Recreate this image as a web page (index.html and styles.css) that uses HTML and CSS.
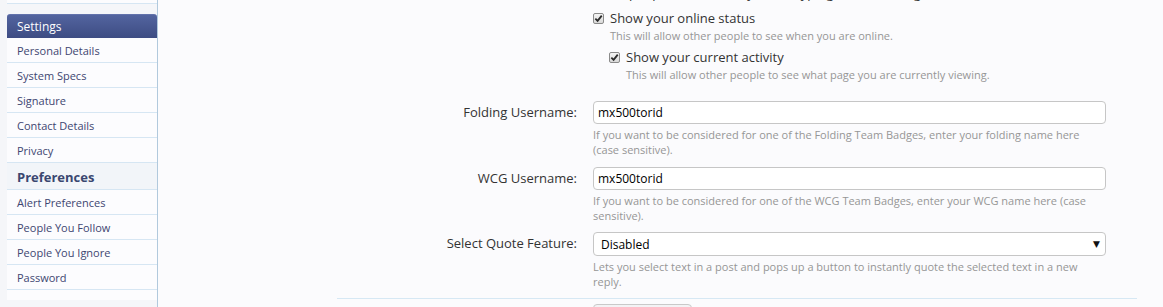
FILE: index.html
```html
<!DOCTYPE html>
<html lang="en">
<head>
    <meta charset="UTF-8">
    <title>Preferences</title>
    <link rel="stylesheet" href="styles.css">
</head>
<body>
    <!-- Side menu -->
    <div class="sidebar">
        <div class="prev-block"></div>
        <div class="menu">
            <div class="menu-heading">Settings</div>
            <a class="menu-item" href="#">Personal Details</a>
            <a class="menu-item" href="#">System Specs</a>
            <a class="menu-item" href="#">Signature</a>
            <a class="menu-item" href="#">Contact Details</a>
            <a class="menu-item" href="#">Privacy</a>
            <a class="menu-item current" href="#">Preferences</a>
            <a class="menu-item" href="#">Alert Preferences</a>
            <a class="menu-item" href="#">People You Follow</a>
            <a class="menu-item" href="#">People You Ignore</a>
            <a class="menu-item" href="#">Password</a>
        </div>
    </div>

    <!-- Form -->
    <div class="main">
        <form class="prefs">
            <div class="row">
                <div class="label"></div>
                <div class="ctrl">
                    <div class="cut-line">Allow people to see what you are typing in the message box</div>
                    <label class="check-row">
                        <span class="check"><svg viewBox="0 0 10 10" width="9" height="9"><path d="M1.5 5.2 L4 7.6 L8.6 1.8" fill="none" stroke="#2b2b2b" stroke-width="2"/></svg></span>
                        Show your online status
                    </label>
                    <p class="hint indent">This will allow other people to see when you are online.</p>
                    <div class="sub">
                        <label class="check-row">
                            <span class="check"><svg viewBox="0 0 10 10" width="9" height="9"><path d="M1.5 5.2 L4 7.6 L8.6 1.8" fill="none" stroke="#2b2b2b" stroke-width="2"/></svg></span>
                            Show your current activity
                        </label>
                        <p class="hint indent">This will allow other people to see what page you are currently viewing.</p>
                    </div>
                </div>
            </div>

            <div class="row folding">
                <div class="label">Folding Username:</div>
                <div class="ctrl">
                    <input class="text-input" type="text" value="mx500torid">
                    <p class="hint">If you want to be considered for one of the Folding Team Badges, enter your folding name here (case sensitive).</p>
                </div>
            </div>

            <div class="row wcg">
                <div class="label">WCG Username:</div>
                <div class="ctrl">
                    <input class="text-input" type="text" value="mx500torid">
                    <p class="hint">If you want to be considered for one of the WCG Team Badges, enter your WCG name here (case sensitive).</p>
                </div>
            </div>

            <div class="row quote">
                <div class="label">Select Quote Feature:</div>
                <div class="ctrl">
                    <div class="select-wrap">
                        <select class="select-input">
                            <option>Disabled</option>
                            <option>Enabled</option>
                        </select>
                        <span class="arrow">▼</span>
                    </div>
                    <p class="hint">Lets you select text in a post and pops up a button to instantly quote the selected text in a new reply.</p>
                </div>
            </div>

            <div class="submit-row">
                <div class="label"></div>
                <div class="ctrl">
                    <button class="button" type="button">Save Changes</button>
                </div>
            </div>
        </form>
    </div>
</body>
</html>
```

FILE: styles.css
```css
/* Common */
body {
    margin: 0;
    height: 307px;
    overflow: hidden;
    display: flex;
    background-color: #fbfbfd;
    font-family: 'Open Sans', 'DejaVu Sans', sans-serif;
}

/* Side menu */
.sidebar {
    width: 150px;
    padding-left: 7px;
    border-right: 1px solid #b1c9dd;
    background-color: #f5f6f9;
    flex-shrink: 0;
}

.prev-block {
    height: 3px;
    background-color: #fcfcfe;
    border-bottom: 1px solid #d6e6f3;
    margin-bottom: 10px;
}

.menu {
    background-color: #fcfcfe;
    padding-bottom: 10px;
}

.menu-heading {
    height: 24px;
    line-height: 24px;
    padding-left: 10px;
    color: #ffffff;
    font-size: 12px;
    background: linear-gradient(to bottom, #53649f, #3d4c83);
    border-top: 1px solid #6272ab;
    box-sizing: border-box;
    border-radius: 3px 3px 0 0;
}

.menu-item {
    display: block;
    height: 24px;
    line-height: 26px;
    padding-left: 10px;
    font-size: 11px;
    color: #3e4671;
    text-decoration: none;
    border-bottom: 1px solid #d6e6f3;
}

.menu-item.current {
    height: 26px;
    line-height: 28px;
    font-size: 13px;
    font-weight: bold;
    color: #3a4770;
    background-color: #f2f5f9;
}

/* Form */
.main {
    flex: 1;
    padding-left: 179px;
}

.prefs {
    width: 800px;
}

.row,
.submit-row {
    display: grid;
    grid-template-columns: 240px 513px;
    column-gap: 16px;
}

.label {
    text-align: right;
    font-size: 13px;
    line-height: 23px;
    color: #333333;
}

.cut-line {
    margin-top: -16px;
    padding-bottom: 1px;
    font-size: 13px;
    line-height: 18px;
    color: #333333;
    white-space: nowrap;
}

.check-row {
    display: flex;
    align-items: center;
    gap: 6px;
    margin-top: 6px;
    font-size: 13px;
    line-height: 18px;
    color: #333333;
}

.check {
    width: 9px;
    height: 9px;
    border: 1px solid #8a8a8a;
    border-radius: 2px;
    background: linear-gradient(to bottom, #f4f4f4, #d9d9d9);
    display: flex;
    align-items: center;
    justify-content: center;
}

.hint {
    margin: 3px 0 0;
    font-size: 11px;
    line-height: 15px;
    color: #969696;
}

.hint.indent {
    margin-top: 1px;
    padding-left: 17px;
}

.sub {
    padding-left: 16px;
}

.sub .check-row {
    margin-top: 5px;
}

.folding {
    margin-top: 19px;
}

.wcg {
    margin-top: 10px;
}

.quote {
    margin-top: 9px;
}

.text-input {
    display: block;
    width: 100%;
    height: 23px;
    box-sizing: border-box;
    padding: 0 4px;
    border: 1px solid #c6c6c6;
    border-radius: 4px;
    background-color: #ffffff;
    font-family: inherit;
    font-size: 12px;
    color: #000000;
}

.select-wrap {
    position: relative;
}

.select-input {
    display: block;
    width: 100%;
    height: 24px;
    box-sizing: border-box;
    padding: 0 7px;
    border: 1px solid #c6c6c6;
    border-radius: 4px;
    background-color: #ffffff;
    appearance: none;
    font-family: inherit;
    font-size: 12px;
    color: #000000;
}

.arrow {
    position: absolute;
    right: 6px;
    top: 6px;
    font-size: 9px;
    line-height: 12px;
    color: #111111;
    pointer-events: none;
}

.submit-row {
    margin-top: 9px;
    padding-top: 5px;
    border-top: 1px solid #d6e8f4;
}

.button {
    width: 99px;
    height: 32px;
    padding-top: 8px;
    border: 1px solid #c9c9c9;
    border-radius: 4px;
    background-color: #f3f3f5;
    font-family: inherit;
    font-size: 12px;
    color: #333333;
}
```
